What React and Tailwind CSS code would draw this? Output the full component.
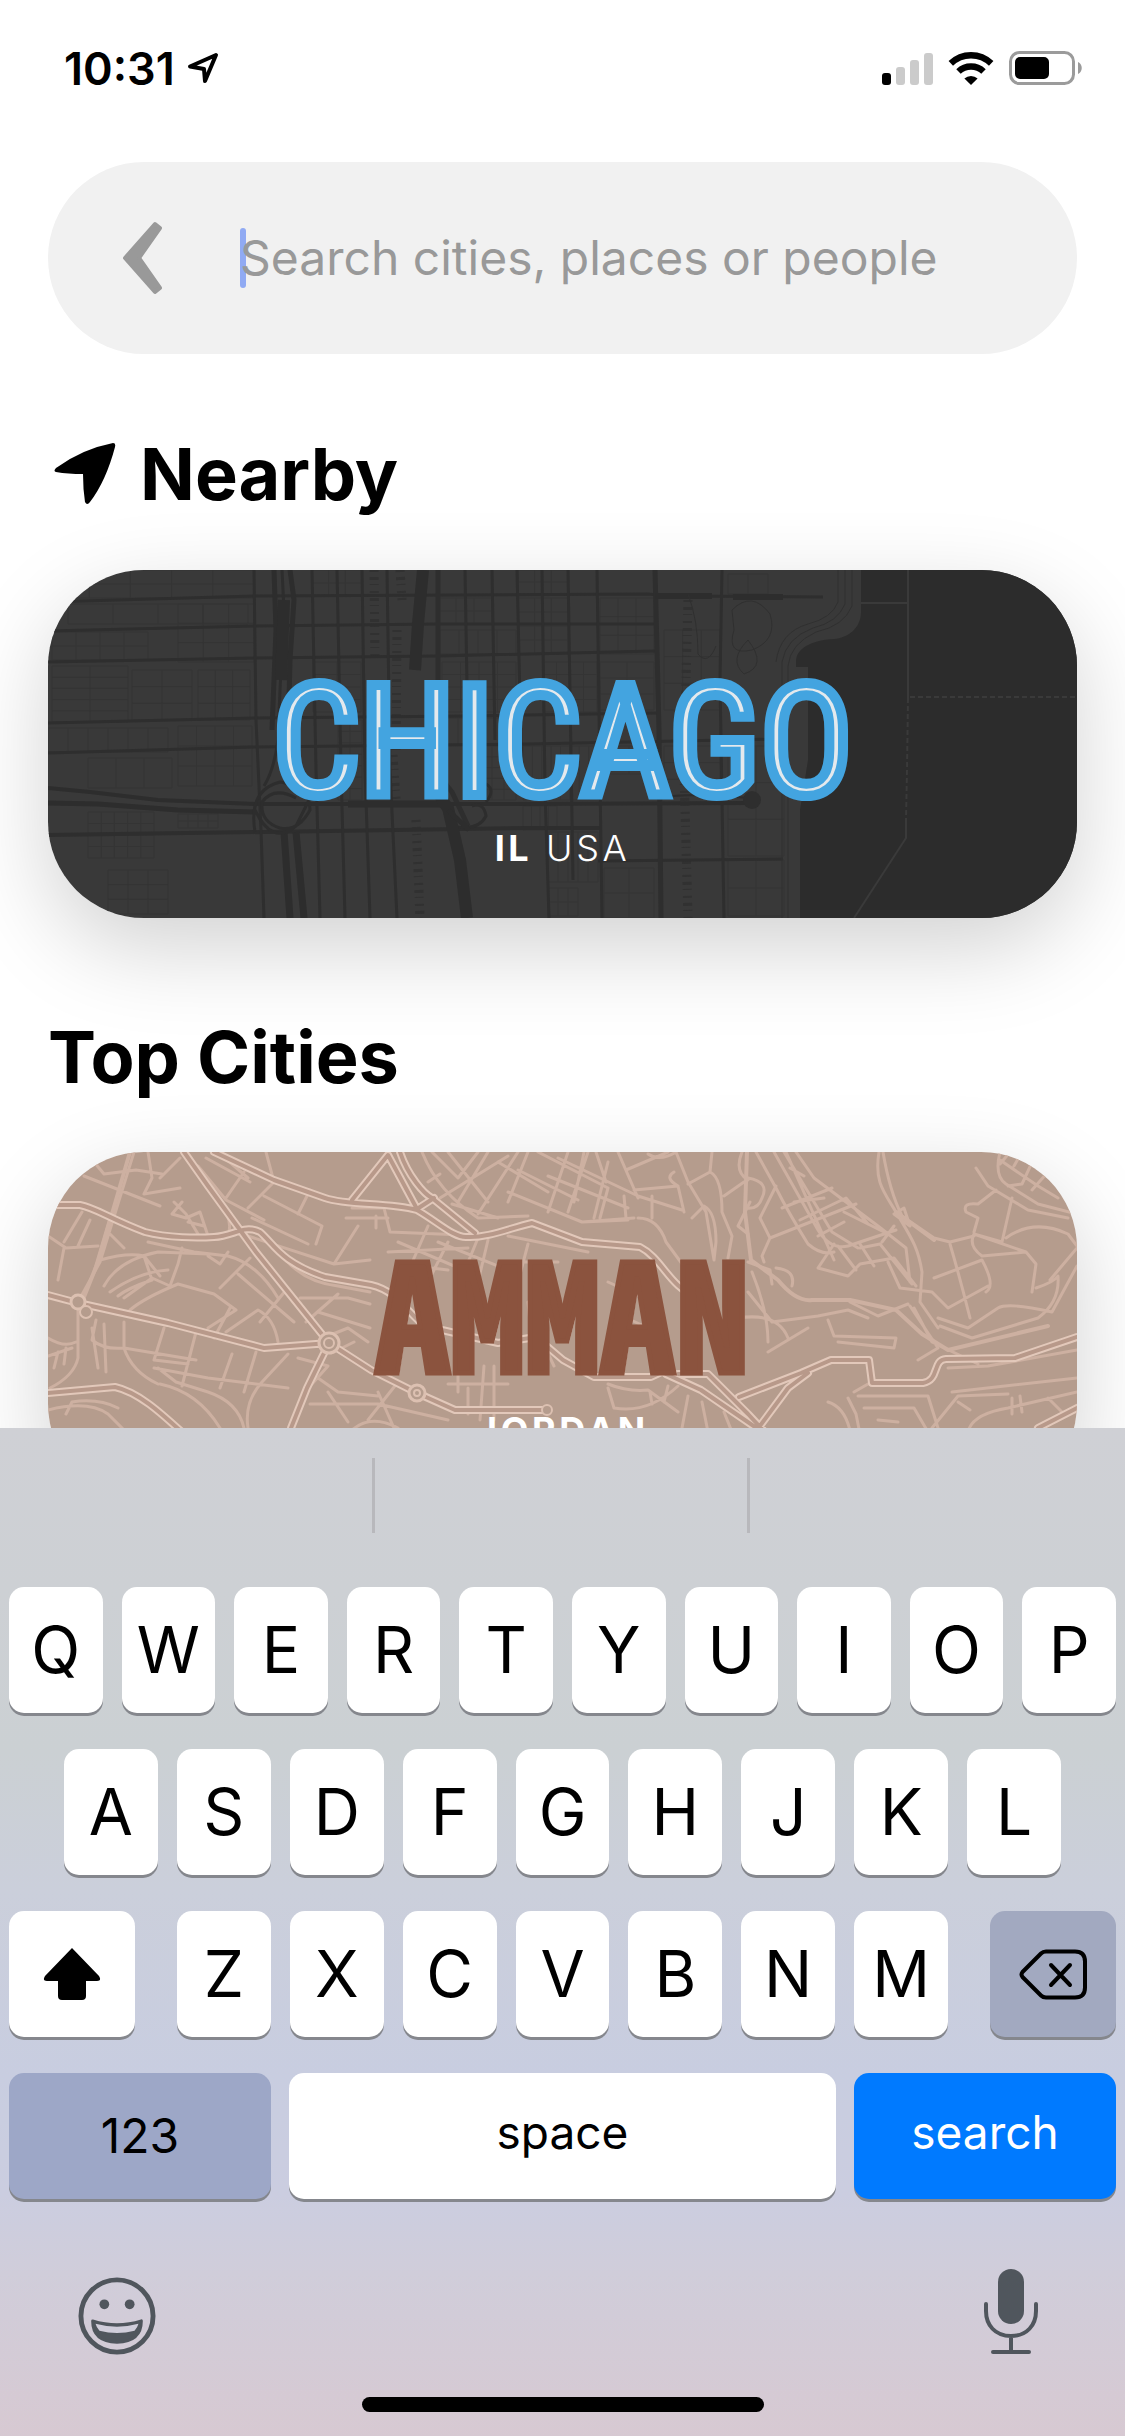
import React from "react";

/* ---------- status bar icons ---------- */

function LocationOutline() {
  return (
    <svg className="h-8 w-8" viewBox="0 0 32 32" fill="none" stroke="#000" strokeWidth="4" strokeLinejoin="round" aria-hidden="true">
      <path d="M29 3 L3 14.500 L17 17 L18 29 Z" />
    </svg>
  );
}

function SignalIcon() {
  return (
    <svg className="h-[33px] w-[51px]" viewBox="0 0 51 33" aria-hidden="true">
      <rect x="0" y="21" width="9" height="12" rx="3" fill="#000" />
      <rect x="14" y="15" width="9" height="18" rx="3" fill="#cbcbcb" />
      <rect x="28" y="8" width="9" height="25" rx="3" fill="#cbcbcb" />
      <rect x="42" y="1" width="9" height="32" rx="3" fill="#cbcbcb" />
    </svg>
  );
}

function WifiIcon() {
  return (
    <svg className="h-[33px] w-[46px]" viewBox="0 0 46 33" aria-hidden="true">
      <path d="M23 33 L16.4 26.6 a9.4 9.4 0 0 1 13.2 0 Z" fill="#000" />
      <path d="M10.5 19.5 a18 18 0 0 1 25 0" fill="none" stroke="#000" strokeWidth="6.4" />
      <path d="M2.8 11.4 a29 29 0 0 1 40.4 0" fill="none" stroke="#000" strokeWidth="6.4" />
    </svg>
  );
}

function BatteryIcon() {
  return (
    <svg className="h-[34px] w-[74px]" viewBox="0 0 74 34" aria-hidden="true">
      <rect x="1.5" y="1.5" width="63" height="31" rx="9" fill="#fff" stroke="#9b9b9b" strokeWidth="3" />
      <rect x="6" y="6" width="34" height="22" rx="5" fill="#000" />
      <path d="M69 11 c5 2 5 10 0 12 Z" fill="#9b9b9b" />
    </svg>
  );
}

/* ---------- map drawings ---------- */

function streetGrid(x, y, w, h, cols, rows) {
  let d = "";
  for (let i = 0; i <= cols; i++) {
    const px = x + (w * i) / cols;
    d += `M${px} ${y}V${y + h}`;
  }
  for (let j = 0; j <= rows; j++) {
    const py = y + (h * j) / rows;
    d += `M${x} ${py}H${x + w}`;
  }
  return d;
}

const chicagoAlleys = [
  [0, 0, 206, 28, 5, 2], [20, 34, 180, 20, 4, 1], [4, 62, 96, 28, 4, 2], [130, 34, 76, 58, 3, 3],
  [4, 96, 76, 56, 2, 5], [84, 100, 60, 50, 2, 3], [150, 100, 52, 50, 3, 3], [0, 158, 120, 24, 6, 1],
  [130, 156, 74, 60, 4, 3], [40, 188, 84, 30, 3, 1], [40, 242, 66, 46, 5, 4], [130, 244, 40, 14, 4, 2],
  [60, 300, 60, 44, 3, 3], [264, 0, 50, 26, 3, 2], [265, 92, 48, 50, 2, 4], [290, 150, 24, 80, 2, 7],
  [390, 28, 54, 26, 3, 2], [392, 60, 76, 24, 4, 1], [394, 92, 74, 50, 4, 4], [396, 148, 70, 26, 5, 1],
  [420, 176, 48, 54, 4, 5], [470, 0, 50, 24, 3, 2], [470, 28, 50, 56, 3, 4], [495, 92, 54, 50, 4, 4],
  [475, 176, 75, 54, 8, 1], [475, 236, 34, 24, 4, 1], [500, 262, 50, 50, 5, 1], [552, 28, 54, 56, 3, 3],
  [552, 92, 54, 48, 2, 3], [556, 176, 50, 28, 2, 1], [500, 318, 30, 28, 3, 2], [556, 298, 50, 50, 2, 2],
  [616, 60, 56, 80, 3, 3], [616, 176, 56, 50, 2, 3], [680, 176, 56, 110, 2, 3], [680, 290, 56, 56, 2, 2],
  [680, 4, 40, 20, 2, 1],
];

function ChicagoMap() {
  return (
    <svg className="absolute inset-0 h-full w-full" viewBox="0 0 1029 348" preserveAspectRatio="xMidYMid slice" aria-hidden="true">
      <rect width="1029" height="348" fill="#393939" />
      <path d={chicagoAlleys.map((a) => streetGrid(...a)).join("")} fill="none" stroke="#343434" strokeWidth="1" />
      <g fill="none" stroke="#313131" strokeWidth="9" strokeDasharray="2 5 3 4 1 6">
        <path d="M326 0 L327 90 M352 0 L354 30 M349 60 L348 185 M345 185 L348 230 M368 250 L372 348 M640 30 L636 190 M636 200 L640 348" />
      </g>
      <g fill="none" stroke="#2e2e2e" strokeWidth="3">
        <path d="M0 32 L207 26 L600 24 L620 26 L775 27" />
        <path d="M0 61 L207 56 L390 54 L607 54" />
        <path d="M0 92 L207 88 L390 86 L607 81" />
        <path d="M0 153 L207 148 L420 146 L610 143" />
        <path d="M0 183 L207 177 L480 174 L735 169" />
        <path d="M0 265 L216 262 L480 258 L552 258" strokeWidth="4" />
        <path d="M550 291 L735 289" />
        <path d="M206 0 L208 150 L213 260 L216 348" />
        <path d="M264 0 L268 200 L272 348" />
        <path d="M289 0 L293 200 L297 348" />
        <path d="M314 0 L317 200 L322 348" />
        <path d="M339 0 L342 200 L349 348" />
        <path d="M390 0 L390 190 Q392 210 404 222 L420 256" strokeWidth="5" />
        <path d="M417 0 L421 230" />
        <path d="M444 0 L447 170" />
        <path d="M469 0 L474 220" />
        <path d="M494 0 L497 220 L501 348" />
        <path d="M520 0 L525 310" />
        <path d="M549 0 L554 348" />
        <path d="M607 0 L611 160 L613 348" strokeWidth="5" />
        <path d="M674 0 L672 110 L676 348" />
      </g>
      <g fill="none" stroke="#2d2d2d">
        <path d="M234 0 L236 40 L232 120 L230 170 Q226 200 216 216" strokeWidth="3" />
        <path d="M226 0 L228 60 L224 160 M242 0 L246 30 L242 90 L240 170" strokeWidth="5" />
        <path d="M236 30 L233 110" strokeWidth="12" />
        <path d="M236 262 L242 348 M248 262 L256 348" strokeWidth="7" />
        <path d="M0 218 L42 222 L110 230 L207 234 L390 234 L470 234 L700 233" strokeWidth="4" />
        <path d="M0 233 L50 234 L130 240 L207 242" strokeWidth="5" />
        <path d="M300 234 H400" strokeWidth="7" />
        <path d="M607 26 H664 M685 27 H735" strokeWidth="6" />
        <path d="M612 228 Q640 222 700 228" strokeWidth="2" />
        <path d="M207 262 Q200 220 232 212 Q262 216 262 240 Q250 262 232 258 Q212 252 214 232 Q226 216 248 228 M207 240 Q224 276 248 256 L262 228" strokeWidth="3" />
        <path d="M404 256 Q430 262 438 246 Q436 232 424 236 M438 232 Q448 220 438 214" strokeWidth="3" />
        <path d="M375 0 L370 54 L367 100" strokeWidth="12" />
        <path d="M383 184 Q386 222 400 238 L412 290 L419 348" strokeWidth="12" />
        <path d="M400 240 L421 260" strokeWidth="5" />
      </g>
      <circle cx="704" cy="230" r="9" fill="#2e2e2e" />
      <g fill="none" stroke="#303030" strokeWidth="1">
        <path d="M797 0 V34 Q790 52 765 58 Q738 68 734 92 V348 M804 0 V36 Q796 56 768 62 Q742 74 740 96 V348 M790 0 V32 Q784 48 760 54 Q732 62 728 92" />
        <path d="M684 40 Q704 20 722 44 Q730 70 704 80 Q678 86 686 60 Z M700 70 Q720 96 696 104 Q680 90 700 70 Z M640 24 Q650 50 650 84 Q660 96 668 76" />
      </g>
      <path d="M813 0 V42 C813 58 800 68 786 69 C768 70 748 76 748 92 V97 H760 V190 L752 240 V348 H1029 V0 Z" fill="#2c2c2c" />
      <g fill="none" stroke="#3a3a3a" strokeWidth="2">
        <path d="M860 0 V128 M813 33 H860" />
        <path d="M860 128 L859 200 L858 250 M862 127 H1029" strokeDasharray="5 3" />
        <path d="M858 250 V268 L806 348" />
      </g>
    </svg>
  );
}

const ammanMajor = [
  "M4 53 H32 C48 56 60 66 97 80 C120 86 150 86 166 85 C186 84 196 72 212 80 C226 92 232 110 277 125 L323 133 C354 140 362 168 381 175 L450 191 L488 185 L515 208 L546 225 H603 L618 218",
  "M136 0 L160 34 L208 100 L281 191 L259 236 L243 276 L230 348",
  "M166 0 L226 28 L277 46 C300 54 340 50 369 58 C390 70 406 86 419 85 C440 86 462 76 484 71 L534 90 L592 95 C614 106 622 136 648 144",
  "M304 48 L340 3 L369 57 L386 46",
  "M352 0 C360 24 376 42 384 46 L427 81",
  "M0 143 L30 151 L120 171 L216 196 L281 191 L323 218 L369 241 L407 258 H499",
  "M0 241 L67 235 C90 240 112 260 136 282 L160 348",
  "M618 222 L653 238 L707 275 L740 320",
  "M630 222 H660 L700 262 L726 290",
  "M691 245 L753 221 L783 208 H821 L824 231 H875 C892 228 884 208 898 207 L967 206 L1029 185",
  "M700 290 L740 236 L760 221",
  "M990 276 L1029 256",
];

const ammanMinor = [
  "M86 0 L52 110 L30 150 M30 156 V206 Q26 224 2 236 M60 80 L76 96 M62 66 L46 120",
  "M36 24 L112 54 M46 10 L56 22 L88 18 L114 22 M100 0 L104 26 L96 42 L132 36 M112 26 L132 6 M126 50 L138 62 L150 82",
  "M134 50 L124 62 L138 66 L152 60 L160 84 M140 70 L156 74",
  "M158 6 L202 30 M150 14 L178 48 L216 68 M170 0 L200 26",
  "M218 0 L226 30 M178 46 L196 20 M200 56 L226 30 M204 66 L260 92 M216 44 L274 74 L268 92 M250 62 L262 38",
  "M180 84 Q186 66 170 50 M200 84 L286 112 L322 108 M286 112 L310 74 M298 66 H340 M304 56 H336 L342 80 M328 64 V76",
  "M0 84 L18 96 L50 94 M16 96 L10 128 M34 60 L16 90 M42 68 L30 94 M52 108 Q80 100 96 104 L104 128 Q80 136 70 144",
  "M56 134 Q70 108 110 100 L160 102 M62 140 Q90 120 120 118 M76 146 L104 126 L122 134 L130 112 M96 104 L112 124 M130 112 L134 96 M160 104 L172 112 L180 100",
  "M100 90 L146 100 L180 104 Q210 112 230 146 M82 158 Q96 146 130 132 L166 142 L188 158 L160 176 M172 136 L202 106 M190 122 L246 170",
  "M212 170 L238 138 M166 186 L182 156 M178 180 L210 158 Q226 166 230 190 M236 106 Q256 130 290 134 L322 140",
  "M252 146 H300 L322 152 M258 170 L290 142 M270 160 L322 176 M280 184 L300 176 L320 190 M286 200 L306 190",
  "M48 168 L44 188 Q56 198 76 196 L148 208 M76 170 L76 196 Q84 220 110 232 M116 176 L106 208 L140 212 M148 180 L134 234 M106 216 L160 226 L240 236 M184 202 L172 236 M208 200 L196 240",
  "M110 216 L128 230 L160 240 Q190 250 196 276 M112 232 Q150 240 172 276 M240 202 L214 230 Q196 250 200 276 M250 206 L280 214 L264 232",
  "M44 176 L50 216 M56 172 L58 220 M0 186 Q16 196 28 190 M0 204 L24 196 M6 216 L10 200 M16 212 L18 196",
  "M0 258 Q40 248 60 262 L80 282 M18 262 L24 250 Q50 246 70 256",
  "M270 226 L290 240 L330 244 M262 252 H330 L400 268 M280 240 L300 270 M330 240 L346 276 M350 230 L320 268",
  "M300 282 Q320 260 350 276 M400 232 H460 M410 214 V240 M420 236 V262 M436 214 L432 268 M446 214 V268",
  "M374 0 Q390 40 430 66 L480 64 M384 0 L410 26 L430 0 M400 0 L440 50 M440 0 L410 50 M470 0 L430 62 M450 10 L500 40 M480 0 L460 50",
  "M380 30 L392 22 M392 46 L460 4 M404 52 L450 66 M460 40 L534 70 L586 66 M470 18 L530 48 M490 0 L560 36",
  "M500 60 L520 0 M520 60 L540 0 M536 0 L526 50 M546 66 L560 10 M500 24 L580 56 M510 6 L590 44 L634 58",
  "M340 100 L420 96 M342 80 L440 84 M380 74 L360 120 M400 90 L380 130 M350 90 L420 120 M430 86 L412 130 M350 112 L400 118",
  "M390 90 L470 122 M440 88 L430 130 M460 84 L540 100 M480 92 L470 130 M470 110 H510",
  "M570 0 L590 46 M578 18 L620 0 M548 0 L558 30 M586 38 L630 34 L636 60 M604 44 V66 M576 44 L578 66 M560 36 L552 66",
  "M590 66 Q610 66 618 90 L640 120 M534 70 L580 68 M600 2 Q612 10 628 0 M628 0 L640 30 L658 60 L666 108",
  "M626 20 Q616 26 630 34 M640 32 L662 20 L664 0 M662 20 Q674 26 674 60 L684 84 L680 106 M644 66 L656 54 Q668 60 668 90 L666 108 M676 44 L696 30",
  "M694 0 Q686 20 700 28 M700 26 Q722 30 714 46 Q710 58 698 56 M702 50 L690 74 L700 82 M708 0 L728 36 Q740 60 760 92 Q774 104 786 100",
  "M726 0 L770 78 Q782 98 800 94 M736 0 L784 80 L810 96 M748 0 L766 26 L830 74 L858 96 L862 130 M756 24 L742 16",
  "M734 56 L784 36 M722 86 L808 52 M752 68 L798 46 L820 72 M746 50 L776 46 M770 84 L796 70 M796 60 L840 82 M800 94 L848 78 M786 92 L770 116 L800 124 L812 112 L846 106 L868 134",
  "M722 86 L714 104 L716 110 M722 86 L712 66 L728 34 M738 0 L786 108",
  "M790 94 L808 118 M812 92 L826 114 M834 90 L846 74",
  "M840 110 L852 136 L884 140 M812 96 L832 92 L864 132 M700 110 L722 118 L724 132 M728 116 Q748 118 744 134",
  "M831 0 C826 30 836 40 848 60 C862 84 870 94 874 120 L872 150 L890 176 M835 0 C840 30 848 52 854 64 L886 86 L902 90 L926 84",
  "M846 62 L856 56 L862 74 Z M926 80 L930 66 L918 60 Q914 50 930 52 L948 38 M928 16 L940 34 L980 58 L1020 66 M952 0 Q946 24 958 32 L990 52 L1029 62",
  "M952 8 L990 34 L1010 46 M962 0 L952 12 M974 0 L966 14 M986 6 L974 32 L960 34 M1000 20 L984 38 M964 46 L954 90 M926 82 L978 100 L934 104 Q920 94 926 82 L954 90",
  "M958 86 Q986 66 1020 82 L1029 94 M978 100 L988 112 L984 140 M902 92 Q912 126 922 166 M884 140 L900 156 L940 134 M886 126 L934 108 Q948 134 938 140",
  "M1029 96 L1002 128 M1029 114 L1004 160 Q960 150 950 156 L920 176 L890 166",
  "M988 136 Q1006 130 1010 124 Q1012 150 990 166 L924 186 L892 174",
  "M690 166 Q730 160 740 186 M700 140 L724 170 L770 164 L800 158 L820 166 M704 120 Q720 160 720 190 M780 168 L786 184 L848 186 L846 196 L790 190 M720 200 L760 176",
  "M862 154 L890 196 L870 208 M866 156 L884 190 L930 212 M860 152 L830 164 L802 150",
  "M806 240 L820 232 M800 246 L808 262 L812 282 M810 244 H880 L890 276 M816 256 H866 L880 280 M830 268 L850 270 M780 250 Q800 256 804 290",
  "M900 216 L940 214 L1029 198 M904 240 L1029 226 M884 276 L910 244 L960 242 M910 250 L922 258 M920 280 Q924 262 960 256 L1029 240 M964 246 V262 M972 244 L974 260 M1000 246 L1016 262",
  "M560 232 Q580 240 600 238 L630 260 M560 236 L566 256 Q600 262 630 234 M602 240 L604 252 M620 234 L616 250 M640 244 L634 276 M654 250 L660 280 M676 260 L684 280",
  "M490 180 L506 214 M500 160 L520 176 M566 160 L600 176 M560 130 L604 150 M480 150 L486 210",
];

function AmmanMap() {
  const major = ammanMajor.join("");
  return (
    <svg className="absolute inset-0 h-full w-full" viewBox="0 0 1029 348" preserveAspectRatio="xMidYMid slice" aria-hidden="true">
      <rect width="1029" height="348" fill="#b59c8d" />
      <g fill="none" strokeLinejoin="round" strokeLinecap="round">
        <path d={ammanMinor.join("")} stroke="#cdb0a1" strokeWidth="3" />
        <path d="M699 0 L697 60 L703 108 L730 128 Q748 150 764 148 L802 148 L848 158 L874 182 L900 198 L1000 174 M82 0 L50 110 L34 150 M848 60 L886 88" stroke="#cdb0a1" strokeWidth="4" />
        <path d={major} stroke="#e2c8ba" strokeWidth="8" />
        <path d={major} stroke="#b8998a" strokeWidth="4" />
        <circle cx="281" cy="191" r="10" fill="#b59c8d" stroke="#dcc0b1" strokeWidth="3" />
        <circle cx="281" cy="191" r="5" stroke="#dcc0b1" strokeWidth="2" />
        <circle cx="30" cy="150" r="7" fill="#b59c8d" stroke="#dcc0b1" strokeWidth="3" />
        <circle cx="38" cy="160" r="6" fill="#b59c8d" stroke="#dcc0b1" strokeWidth="2" />
        <circle cx="369" cy="241" r="8" fill="#b59c8d" stroke="#dcc0b1" strokeWidth="3" />
        <circle cx="369" cy="241" r="3" stroke="#dcc0b1" strokeWidth="2" />
        <circle cx="499" cy="258" r="5" fill="#b59c8d" stroke="#dcc0b1" strokeWidth="2" />
      </g>
    </svg>
  );
}

/* ---------- keyboard ---------- */

const keyBase = "flex h-[126px] items-center justify-center rounded-[15px] shadow-[0_3px_0_#85878d]";

function LetterKey({ children }) {
  return (
    <button type="button" className={`${keyBase} min-w-0 flex-1 bg-white text-[64px] leading-none text-black`}>
      {children}
    </button>
  );
}

function letters(row) {
  return row.split("").map((l) => <LetterKey key={l}>{l}</LetterKey>);
}

function Keyboard() {
  return (
    <section
      aria-label="Keyboard"
      className="shrink-0 bg-[linear-gradient(to_bottom,#cfd0d5_0%,#cbd0d3_32%,#cbcfdb_46%,#c8cde0_64%,#cbcde0_76%,#d0cdda_84%,#d7c9d2_100%)]"
    >
      <div className="grid h-[159px] grid-cols-3 divide-x-3 divide-[#b8b8bc] pt-[30px] pb-[54px]">
        <div />
        <div />
        <div />
      </div>
      <div className="flex flex-col gap-9">
        <div className="flex gap-[19px] px-[9px]">{letters("QWERTYUIOP")}</div>
        <div className="flex gap-[19px] px-16">{letters("ASDFGHJKL")}</div>
        <div className="flex gap-[42px] px-[9px]">
          <button type="button" aria-label="Shift" className={`${keyBase} w-[126px] bg-white`}>
            <svg className="h-[52px] w-[58px]" viewBox="0 0 58 52" aria-hidden="true">
              <path d="M29 0 L56 28 Q59 33 54 33 H43 V48 Q43 52 39 52 H19 Q15 52 15 48 V33 H4 Q-1 33 2 28 Z" fill="#000" />
            </svg>
          </button>
          <div className="flex min-w-0 flex-1 gap-[19px]">{letters("ZXCVBNM")}</div>
          <button type="button" aria-label="Delete" className={`${keyBase} w-[126px] bg-[#a2a9c0]`}>
            <svg className="h-[51px] w-[69px]" viewBox="0 0 69 51" fill="none" stroke="#000" strokeWidth="4" strokeLinecap="round" strokeLinejoin="round" aria-hidden="true">
              <path d="M27 2.500 H56 Q66 2.500 66 12.500 V38.500 Q66 48.500 56 48.500 H27 Q24 48.500 22 46.500 L3.500 28 Q1.500 25.500 3.500 23 L22 4.500 Q24 2.500 27 2.500 Z" />
              <path d="M32 16 L51 36 M51 16 L32 36" />
            </svg>
          </button>
        </div>
        <div className="flex gap-[18px] px-[9px] text-[46px] leading-none">
          <button type="button" className={`${keyBase} w-[262px] bg-[#9da7c7] text-[48px] text-black`}>123</button>
          <button type="button" className={`${keyBase} min-w-0 flex-1 bg-white pb-2 text-black`}>space</button>
          <button type="button" className={`${keyBase} w-[262px] bg-[#007aff] pb-2 text-white`}>search</button>
        </div>
      </div>
      <div className="flex items-end justify-between px-[78px] pt-[70px]">
        <button type="button" aria-label="Emoji">
          <svg className="h-[78px] w-[78px]" viewBox="0 0 80 80" aria-hidden="true">
            <circle cx="40" cy="40" r="37" fill="none" stroke="#50565d" strokeWidth="5" />
            <ellipse cx="27" cy="28" rx="5" ry="5" fill="#50565d" />
            <ellipse cx="53" cy="28" rx="5" ry="5" fill="#50565d" />
            <path d="M15 45 Q40 53 65 45 Q65 66 40 67 Q15 66 15 45 Z" fill="#50565d" stroke="#50565d" strokeWidth="3" strokeLinejoin="round" />
            <path d="M18 48 Q40 54 62 48 Q61 52 58 55 Q40 60 22 55 Q19 52 18 48 Z" fill="#d0cdda" />
          </svg>
        </button>
        <button type="button" aria-label="Dictate" className="mr-2">
          <svg className="h-[86px] w-[56px]" viewBox="0 0 56 86" aria-hidden="true">
            <rect x="15" y="0" width="26" height="55" rx="13" fill="#50565d" />
            <path d="M3 35 V42 C3 56 12 67 28 67 C44 67 53 56 53 42 V35 M28 67 V83 M10 83 H46" fill="none" stroke="#50565d" strokeWidth="4" strokeLinecap="round" />
          </svg>
        </button>
      </div>
      <div className="mx-auto mt-[42px] mb-6 h-[15px] w-[402px] rounded-full bg-black" />
    </section>
  );
}

/* ---------- page ---------- */

function CityCard({ map, name, nameClass, children }) {
  return (
    <a
      href="#city"
      className="relative flex h-[348px] shrink-0 flex-col items-center overflow-hidden rounded-[96px] pt-[104px] text-white"
    >
      {map}
      <span className={`relative flex items-center leading-none ${nameClass}`}>{name}</span>
      <span className="relative mt-[14px] text-[36px] leading-[44px] tracking-widest">{children}</span>
    </a>
  );
}

export default function App() {
  return (
    <div className="flex h-screen flex-col overflow-hidden bg-white font-['Inter',sans-serif] text-black">
      <header className="flex h-[132px] shrink-0 items-center justify-between pt-1 pr-[42px] pl-16">
        <div className="flex items-center gap-3">
          <time className="text-[45px] leading-none font-semibold">10:31</time>
          <LocationOutline />
        </div>
        <div className="flex items-center gap-[15px]">
          <SignalIcon />
          <WifiIcon />
          <BatteryIcon />
        </div>
      </header>

      <main className="flex min-h-0 flex-1 flex-col overflow-hidden px-12 pt-[30px]">
        <form role="search" className="flex h-48 shrink-0 items-center rounded-full bg-[#f1f1f1] pr-12 pl-[72px]" onSubmit={(e) => e.preventDefault()}>
          <button type="button" aria-label="Back" className="shrink-0">
            <svg className="h-[76px] w-12" viewBox="0 0 48 76" aria-hidden="true">
              <path d="M5 38 L35 4 L40 8 L19 38 L40 68 L35 72 Z" fill="#999" stroke="#999" strokeWidth="4" strokeLinejoin="round" />
            </svg>
          </button>
          <span className="ml-[72px] h-[60px] w-1.5 shrink-0 rounded-full bg-[#90aaf3]" />
          <input
            type="text"
            aria-label="Search cities, places or people"
            placeholder="Search cities, places or people"
            className="-ml-1.5 min-w-0 flex-1 bg-transparent text-[48px] outline-none placeholder:text-[#999]"
          />
        </form>

        <h2 className="mt-[75px] flex shrink-0 items-center gap-6 pl-1.5 text-[72px] leading-[90px] font-bold">
          <svg className="h-[62px] w-[62px]" viewBox="0 0 62 62" aria-hidden="true">
            <path d="M59 0 Q62 0 61 4 Q52 38 36 59 Q33 63 31 59 Q29 46 29 31 Q14 31 2 29 Q-1 28 2 25 Q28 6 59 0 Z" fill="#000" />
          </svg>
          Nearby
        </h2>
        <div className="mt-[51px] shrink-0 rounded-[96px] shadow-[0_30px_90px_rgba(0,0,0,0.18)]">
          <CityCard
            map={<ChicagoMap />}
            name="CHICAGO"
            nameClass="h-[138px] text-[154px] text-[#e4e9ed] font-['Roboto_Condensed','DejaVu_Sans_Condensed',sans-serif] [-webkit-text-stroke:10px_#43a4e0] [text-shadow:3px_3px_0_#e6e6e6]"
          >
            <b>IL</b> <span className="font-light">USA</span>
          </CityCard>
        </div>

        <h2 className="mt-[94px] shrink-0 text-[72px] leading-[90px] font-bold">Top Cities</h2>
        <div className="mt-[50px] shrink-0 rounded-[96px] shadow-[0_30px_90px_rgba(0,0,0,0.18)]">
          <CityCard
            map={<AmmanMap />}
            name="AMMAN"
            nameClass="mb-[34px] h-[104px] text-[150px] font-bold text-[#8b533e] font-['Noto_Sans_Mono_CJK_SC','DejaVu_Sans_Condensed',sans-serif] [-webkit-text-stroke:5px_#8b533e] [text-shadow:2px_2px_0_#e3d6cf]"
          >
            <b>JORDAN</b>
          </CityCard>
        </div>
      </main>

      <Keyboard />
    </div>
  );
}
